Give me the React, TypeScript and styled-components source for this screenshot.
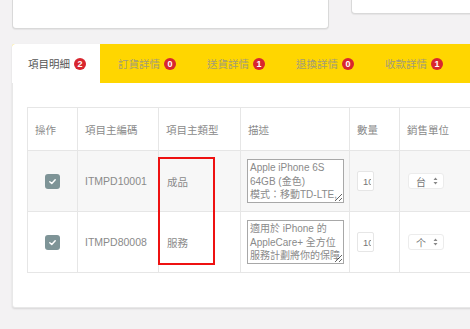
import React from 'react'
import styled, { createGlobalStyle } from 'styled-components'

const GlobalStyle = createGlobalStyle`
    html, body {
        margin: 0;
        padding: 0;
        background: #f3f2f3;
        overflow: hidden;
    }
    body {
        font-family: "Liberation Sans", "Noto Sans CJK TC", sans-serif;
    }
`

interface Tab {
    title: string
    count: number
}

interface Row {
    code: string
    type: string
    desc: string
    qty: string
    unit: string
}

const TABS: Tab[] = [
    { title: '項目明細', count: 2 },
    { title: '訂貨詳情', count: 0 },
    { title: '送貨詳情', count: 1 },
    { title: '退換詳情', count: 0 },
    { title: '收款詳情', count: 1 },
]

const ROWS: Row[] = [
    {
        code: 'ITMPD10001',
        type: '成品',
        desc: 'Apple iPhone 6S 64GB (金色)\n模式：移動TD-LTE, 聯通TD-LTE',
        qty: '10',
        unit: '台',
    },
    {
        code: 'ITMPD80008',
        type: '服務',
        desc: '適用於 iPhone 的 AppleCare+ 全方位服務計劃將你的保障延長',
        qty: '10',
        unit: '个',
    },
]

const Page = styled.div`
    width: 470px;
    height: 329px;
    padding-left: 12px;
    box-sizing: border-box;
    overflow: hidden;
`

const TopRow = styled.div`
    display: flex;
    align-items: flex-start;
    gap: 22px;
`

const TopCard = styled.div<{ $w: number; $h: number }>`
    flex: none;
    width: ${(p) => p.$w}px;
    height: ${(p) => p.$h}px;
    background: #fff;
    border: 1px solid #d9d9d9;
    border-top: none;
    border-radius: 0 0 4px 4px;
    box-sizing: border-box;
    box-shadow: 0 1px 1px rgba(0, 0, 0, 0.06);
`

const MainCard = styled.div`
    margin-top: 15px;
    width: 520px;
    background: #fff;
    border: 1px solid #e8e8e8;
    border-radius: 3px;
    box-sizing: border-box;
    box-shadow: 0 1px 2px rgba(0, 0, 0, 0.12);
    padding-bottom: 34px;
`

const TabBar = styled.div`
    display: flex;
    height: 39px;
    background: #ffd600;
    margin: -1px -1px 0 -1px;
    border-radius: 3px 3px 0 0;
    overflow: hidden;
`

const TabItem = styled.div<{ $active?: boolean }>`
    flex: none;
    display: flex;
    align-items: center;
    gap: 4px;
    height: 100%;
    box-sizing: border-box;
    width: ${(p) => (p.$active ? 88 : 89)}px;
    padding-left: ${(p) => (p.$active ? 16 : 18)}px;
    background: ${(p) => (p.$active ? '#fff' : 'transparent')};
    color: ${(p) => (p.$active ? '#555' : '#a39c78')};
    font-size: 10.5px;
    white-space: nowrap;
`

const Badge = styled.span`
    display: inline-flex;
    align-items: center;
    justify-content: center;
    width: 12px;
    height: 12px;
    border-radius: 50%;
    background: #d8262f;
    color: #fff;
    font-size: 9px;
    font-weight: bold;
`

const TableWrap = styled.div`
    position: relative;
    margin: 24px 0 0 14px;
`

const Table = styled.table`
    border-collapse: collapse;
    table-layout: fixed;
    width: 480px;
    font-size: 10.5px;
    color: #8a8a8a;
`

const Th = styled.th<{ $w: number }>`
    width: ${(p) => p.$w}px;
    height: 43px;
    padding: 0 7px;
    text-align: left;
    font-weight: normal;
    border: 1px solid #e6e6e6;
    box-sizing: border-box;
`

const Tr = styled.tr<{ $striped?: boolean }>`
    height: 61px;
    background: ${(p) => (p.$striped ? '#f7f7f7' : '#fff')};
`

const Td = styled.td<{ $center?: boolean; $pad?: number }>`
    padding: 0 7px 0 ${(p) => p.$pad ?? 7}px;
    border: 1px solid #e6e6e6;
    text-align: ${(p) => (p.$center ? 'center' : 'left')};
    vertical-align: middle;
    white-space: nowrap;
`

const Check = styled.span`
    display: inline-flex;
    align-items: center;
    justify-content: center;
    width: 15px;
    height: 15px;
    border-radius: 3px;
    background: #7e9497;
    vertical-align: middle;
`

const Desc = styled.textarea`
    display: block;
    width: 97px;
    height: 44px;
    margin: 0 0 0 -1px;
    padding: 1px 2px;
    box-sizing: border-box;
    border: 1px solid #a8a8a8;
    border-radius: 0;
    background: #fff;
    color: #8a8a8a;
    font-family: "Liberation Sans", "Noto Sans CJK TC", sans-serif;
    font-size: 10px;
    line-height: 13.5px;
    resize: both;
    overflow: hidden;
    outline: none;
`

const Qty = styled.input`
    width: 17px;
    height: 20px;
    box-sizing: border-box;
    padding: 0 2px 0 5px;
    border: 1px solid #e6e6e6;
    border-radius: 2px;
    background: #fff;
    color: #777;
    font-size: 9.5px;
    font-family: "Liberation Sans", sans-serif;
    outline: none;
`

const Unit = styled.span`
    display: inline-flex;
    align-items: center;
    gap: 7px;
    height: 14px;
    margin-left: 1px;
    padding: 0 5px 0 7px;
    border: 1px solid #ececec;
    border-radius: 3px;
    background: #fff;
    color: #777;
    font-size: 10px;
`

const Highlight = styled.div`
    position: absolute;
    left: 131px;
    top: 50px;
    width: 57px;
    height: 108px;
    border: 2px solid #ee1111;
    box-sizing: border-box;
    pointer-events: none;
`

const CheckIcon = () => (
    <svg width="9" height="9" viewBox="0 0 10 10">
        <path d="M2 5.2 L4.2 7.2 L8 3" fill="none" stroke="#fff" strokeWidth="1.6" strokeLinecap="round" strokeLinejoin="round" />
    </svg>
)

const UpDown = () => (
    <svg width="5" height="8" viewBox="0 0 5 8">
        <path d="M2.5 0.5 L4.5 3 H0.5 Z M2.5 7.5 L4.5 5 H0.5 Z" fill="#888" />
    </svg>
)

const App: React.FC = () => {
    return (
        <>
            <GlobalStyle />
            <Page>
                <TopRow>
                    <TopCard $w={317} $h={29} />
                    <TopCard $w={140} $h={14} />
                </TopRow>
                <MainCard>
                    <TabBar>
                        {TABS.map((tab, i) => (
                            <TabItem key={tab.title} $active={i === 0}>
                                {tab.title}
                                <Badge>{tab.count}</Badge>
                            </TabItem>
                        ))}
                    </TabBar>
                    <TableWrap>
                        <Table>
                            <thead>
                                <tr>
                                    <Th $w={50}>操作</Th>
                                    <Th $w={81}>項目主編碼</Th>
                                    <Th $w={82}>項目主類型</Th>
                                    <Th $w={109}>描述</Th>
                                    <Th $w={50}>數量</Th>
                                    <Th $w={108}>銷售單位</Th>
                                </tr>
                            </thead>
                            <tbody>
                                {ROWS.map((row, i) => (
                                    <Tr key={row.code} $striped={i === 0}>
                                        <Td $center>
                                            <Check><CheckIcon /></Check>
                                        </Td>
                                        <Td>{row.code}</Td>
                                        <Td $pad={8}>{row.type}</Td>
                                        <Td>
                                            <Desc readOnly value={row.desc} />
                                        </Td>
                                        <Td>
                                            <Qty readOnly value={row.qty} />
                                        </Td>
                                        <Td>
                                            <Unit>
                                                {row.unit}
                                                <UpDown />
                                            </Unit>
                                        </Td>
                                    </Tr>
                                ))}
                            </tbody>
                        </Table>
                        <Highlight />
                    </TableWrap>
                </MainCard>
            </Page>
        </>
    )
}

export default App
